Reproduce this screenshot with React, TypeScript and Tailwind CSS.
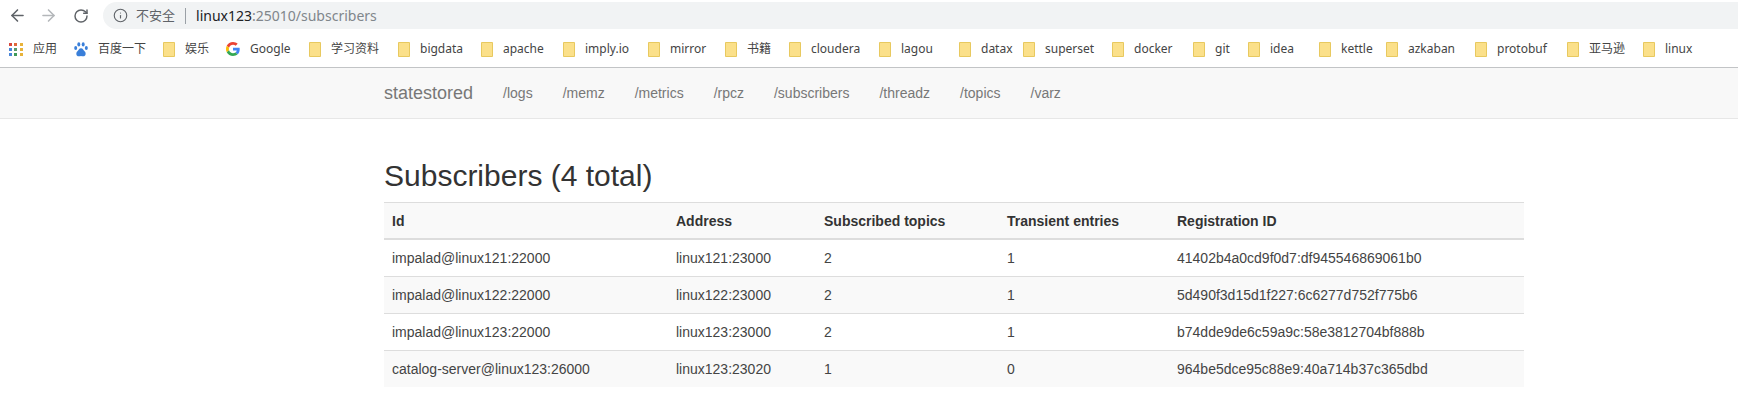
import React from 'react'
import { ArrowLeft, ArrowRight, RotateCw, Info } from 'lucide-react'

const uiFont = "font-['Noto_Sans','Noto_Sans_CJK_SC',sans-serif]"
const pageFont = "font-['Liberation_Sans','Noto_Sans_CJK_SC',sans-serif]"

const FolderIcon = () => (
  <svg width="12" height="15" viewBox="0 0 12 15" className="shrink-0">
    <path d="M0.5 0.5H11.5V14.5H0.5Z" fill="#fbe08a" stroke="#e8c95f" />
  </svg>
)

const AppsIcon = () => {
  const colors = ['#d9473b', '#e0683a', '#e8b33a', '#4a86d8', '#5a9a6a', '#e8b33a', '#4a86d8', '#3f9a58', '#e8b33a']
  return (
    <div className="grid grid-cols-3 gap-[2px] w-[14px] shrink-0">
      {colors.map((c, i) => (
        <div key={i} className="w-[3px] h-[3px]" style={{ backgroundColor: c }} />
      ))}
    </div>
  )
}

const BaiduIcon = () => (
  <svg width="14" height="15" viewBox="0 0 14 15" className="shrink-0">
    <g fill="#3a7fd9">
      <ellipse cx="4.8" cy="2.4" rx="1.5" ry="2.1" />
      <ellipse cx="9.2" cy="2.4" rx="1.5" ry="2.1" />
      <ellipse cx="1.7" cy="6" rx="1.5" ry="1.9" />
      <ellipse cx="12.3" cy="6" rx="1.5" ry="1.9" />
      <path d="M7 6.2c-2 0-2.4 2-3.8 3.2C1.800 10.700 2 14.500 5 14.300c.8 0 1.300-.4 2-.4s1.200.4 2 .4c3 .2 3.200-3.600 1.800-4.900C9.400 8.200 9 6.200 7 6.200Z" />
    </g>
  </svg>
)

const GoogleIcon = () => (
  <svg width="14" height="14" viewBox="0 0 48 48" className="shrink-0">
    <path fill="#EA4335" d="M24 9.500c3.540 0 6.710 1.220 9.210 3.600l6.850-6.850C35.900 2.380 30.470 0 24 0 14.620 0 6.510 5.380 2.560 13.220l7.980 6.190C12.430 13.720 17.740 9.500 24 9.500z" />
    <path fill="#4285F4" d="M46.980 24.550c0-1.570-.15-3.090-.38-4.550H24v9.020h12.940c-.58 2.960-2.260 5.480-4.780 7.180l7.730 6c4.510-4.180 7.090-10.360 7.090-17.650z" />
    <path fill="#FBBC05" d="M10.530 28.590c-.48-1.450-.76-2.990-.76-4.590s.27-3.140.76-4.590l-7.980-6.190C.92 16.460 0 20.120 0 24c0 3.880.92 7.540 2.560 10.780l7.970-6.190z" />
    <path fill="#34A853" d="M24 48c6.480 0 11.930-2.130 15.890-5.810l-7.730-6c-2.150 1.450-4.920 2.300-8.160 2.300-6.260 0-11.570-4.220-13.470-9.910l-7.980 6.190C6.510 42.620 14.620 48 24 48z" />
  </svg>
)

const bookmarks = [
  { label: '应用', icon: 'apps', width: 65 },
  { label: '百度一下', icon: 'baidu', width: 89 },
  { label: '娱乐', icon: 'folder', width: 63 },
  { label: 'Google', icon: 'google', width: 83 },
  { label: '学习资料', icon: 'folder', width: 89 },
  { label: 'bigdata', icon: 'folder', width: 83 },
  { label: 'apache', icon: 'folder', width: 82 },
  { label: 'imply.io', icon: 'folder', width: 85 },
  { label: 'mirror', icon: 'folder', width: 77 },
  { label: '书籍', icon: 'folder', width: 64 },
  { label: 'cloudera', icon: 'folder', width: 90 },
  { label: 'lagou', icon: 'folder', width: 80 },
  { label: 'datax', icon: 'folder', width: 64 },
  { label: 'superset', icon: 'folder', width: 89 },
  { label: 'docker', icon: 'folder', width: 81 },
  { label: 'git', icon: 'folder', width: 55 },
  { label: 'idea', icon: 'folder', width: 71 },
  { label: 'kettle', icon: 'folder', width: 67 },
  { label: 'azkaban', icon: 'folder', width: 89 },
  { label: 'protobuf', icon: 'folder', width: 92 },
  { label: '亚马逊', icon: 'folder', width: 76 },
  { label: 'linux', icon: 'folder', width: 60 }
]

const navLinks = ['/logs', '/memz', '/metrics', '/rpcz', '/subscribers', '/threadz', '/topics', '/varz']

const rows = [
  ['impalad@linux121:22000', 'linux121:23000', '2', '1', '41402b4a0cd9f0d7:df945546869061b0'],
  ['impalad@linux122:22000', 'linux122:23000', '2', '1', '5d490f3d15d1f227:6c6277d752f775b6'],
  ['impalad@linux123:22000', 'linux123:23000', '2', '1', 'b74dde9de6c59a9c:58e3812704bf888b'],
  ['catalog-server@linux123:26000', 'linux123:23020', '1', '0', '964be5dce95c88e9:40a714b37c365dbd']
]

const BookmarkIcon = ({ name }: { name: string }) => {
  if (name === 'apps') return <AppsIcon />
  if (name === 'baidu') return <BaiduIcon />
  if (name === 'google') return <GoogleIcon />
  return <FolderIcon />
}

const App: React.FC = () => {
  return (
    <div className={`w-[1738px] h-[409px] overflow-hidden bg-white ${pageFont}`}>
      {/* toolbar */}
      <div className={`h-[31px] flex items-center pl-[8px] ${uiFont}`}>
        <ArrowLeft size={19} strokeWidth={2} className="text-[#5f6368]" />
        <ArrowRight size={19} strokeWidth={2} className="text-[#b4b7ba] ml-[12px]" />
        <RotateCw size={16} strokeWidth={2.2} className="text-[#5f6368] ml-[15px]" />
        <div className="ml-[14px] flex-1 h-[27px] bg-[#f1f3f4] rounded-l-full flex items-center pl-[10px] text-[14px]">
          <Info size={15} strokeWidth={1.8} className="text-[#5f6368]" />
          <span className="ml-[8px] text-[13px] text-[#5f6368]">不安全</span>
          <div className="w-px h-[16px] bg-[#9aa0a6] ml-[10px]" />
          <span className="ml-[10px] text-[#202124]">linux123</span>
          <span className="text-[#80868b]">:25010/subscribers</span>
        </div>
      </div>

      {/* bookmarks */}
      <div className={`h-[37px] flex items-center pl-[9px] border-b border-[#c2c4c6] text-[12px] text-[#444] ${uiFont}`}>
        {bookmarks.map((b) => (
          <div key={b.label} className="flex items-center gap-[10px] shrink-0" style={{ width: b.width }}>
            <BookmarkIcon name={b.icon} />
            <span>{b.label}</span>
          </div>
        ))}
      </div>

      {/* navbar */}
      <nav className="h-[51px] bg-[#f8f8f8] border-b border-[#e7e7e7] pl-[384px] flex items-center text-[#777]">
        <span className="text-[18px] mr-[15px]">statestored</span>
        {navLinks.map((l) => (
          <span key={l} className="px-[15px] text-[14px]">{l}</span>
        ))}
      </nav>

      <div className="ml-[384px] w-[1140px] pt-[40px] text-[#333]">
        <h2 className="text-[30px] leading-[33px] font-normal mb-[10px]">Subscribers (4 total)</h2>
        <table className="w-full table-fixed border-collapse text-[14px] leading-[20px]">
          <thead>
            <tr className="bg-[#f9f9f9]">
              <th className="w-[284px] px-[8px] pt-[8px] pb-[7px] text-left font-bold border-t border-[#ddd] border-b-2">Id</th>
              <th className="w-[148px] px-[8px] pt-[8px] pb-[7px] text-left font-bold border-t border-[#ddd] border-b-2">Address</th>
              <th className="w-[183px] px-[8px] pt-[8px] pb-[7px] text-left font-bold border-t border-[#ddd] border-b-2">Subscribed topics</th>
              <th className="w-[170px] px-[8px] pt-[8px] pb-[7px] text-left font-bold border-t border-[#ddd] border-b-2">Transient entries</th>
              <th className="px-[8px] pt-[8px] pb-[7px] text-left font-bold border-t border-[#ddd] border-b-2">Registration ID</th>
            </tr>
          </thead>
          <tbody>
            {rows.map((row, i) => (
              <tr key={row[0]} className="even:bg-[#f9f9f9]">
                {row.map((cell, j) => (
                  <td key={j} className={`p-[8px] text-[#444] ${i > 0 ? 'border-t border-[#ddd]' : ''}`}>{cell}</td>
                ))}
              </tr>
            ))}
          </tbody>
        </table>
      </div>
    </div>
  )
}

export default App
